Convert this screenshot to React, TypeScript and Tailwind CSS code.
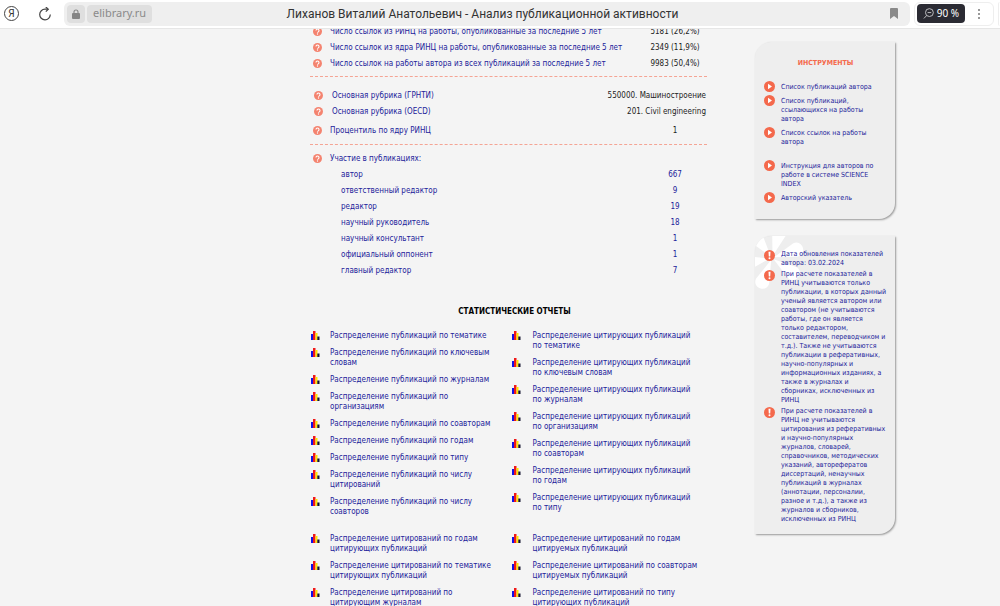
import clsx from 'clsx';

interface Row {
  label: string;
  value: string;
}

interface Tool {
  text: string;
  spaced?: boolean;
}

const citationRows: Row[] = [
  { label: 'Число ссылок из РИНЦ на работы, опубликованные за последние 5 лет', value: '5181 (26,2%)' },
  { label: 'Число ссылок из ядра РИНЦ на работы, опубликованные за последние 5 лет', value: '2349 (11,9%)' },
  { label: 'Число ссылок на работы автора из всех публикаций за последние 5 лет', value: '9983 (50,4%)' },
];

const rubricRows: Row[] = [
  { label: 'Основная рубрика (ГРНТИ)', value: '550000. Машиностроение' },
  { label: 'Основная рубрика (OECD)', value: '201. Civil engineering' },
];

const roleRows: Row[] = [
  { label: 'автор', value: '667' },
  { label: 'ответственный редактор', value: '9' },
  { label: 'редактор', value: '19' },
  { label: 'научный руководитель', value: '18' },
  { label: 'научный консультант', value: '1' },
  { label: 'официальный оппонент', value: '1' },
  { label: 'главный редактор', value: '7' },
];

const publicationReports = [
  'Распределение публикаций по тематике',
  'Распределение публикаций по ключевым словам',
  'Распределение публикаций по журналам',
  'Распределение публикаций по организациям',
  'Распределение публикаций по соавторам',
  'Распределение публикаций по годам',
  'Распределение публикаций по типу',
  'Распределение публикаций по числу цитирований',
  'Распределение публикаций по числу соавторов',
];

const citingReports = [
  'Распределение цитирующих публикаций по тематике',
  'Распределение цитирующих публикаций по ключевым словам',
  'Распределение цитирующих публикаций по журналам',
  'Распределение цитирующих публикаций по организациям',
  'Распределение цитирующих публикаций по соавторам',
  'Распределение цитирующих публикаций по годам',
  'Распределение цитирующих публикаций по типу',
];

const citationReportsLeft = [
  'Распределение цитирований по годам цитирующих публикаций',
  'Распределение цитирований по тематике цитирующих публикаций',
  'Распределение цитирований по цитирующим журналам',
];

const citationReportsRight = [
  'Распределение цитирований по годам цитируемых публикаций',
  'Распределение цитирований по соавторам цитируемых публикаций',
  'Распределение цитирований по типу цитирующих публикаций',
];

const tools: Tool[] = [
  { text: 'Список публикаций автора' },
  { text: 'Список публикаций,\nссылающихся на работы\nавтора' },
  { text: 'Список ссылок на работы\nавтора' },
  { text: 'Инструкция для авторов по\nработе в системе SCIENCE\nINDEX', spaced: true },
  { text: 'Авторский указатель' },
];

const notes = [
  `Дата обновления показателей
автора: 03.02.2024`,
  `При расчете показателей в
РИНЦ учитываются только
публикации, в которых данный
ученый является автором или
соавтором (не учитываются
работы, где он является
только редактором,
составителем, переводчиком и
т.д.). Также не учитываются
публикации в реферативных,
научно-популярных и
информационных изданиях, а
также в журналах и
сборниках, исключенных из
РИНЦ`,
  `При расчете показателей в
РИНЦ не учитываются
цитирования из реферативных
и научно-популярных
журналов, словарей,
справочников, методических
указаний, авторефератов
диссертаций, ненаучных
публикаций в журналах
(аннотации, персоналии,
разное и т.д.), а также из
журналов и сборников,
исключенных из РИНЦ`,
];

function HelpIcon() {
  return (
    <svg viewBox="0 0 18 18" className="block size-[9px]" aria-hidden="true">
      <circle cx="9" cy="9" r="9" fill="#f4836f" />
      <path d="M6 7.2a3 3 0 1 1 4.6 2.5C9.5 10.4 9 10.8 9 11.6" fill="none" stroke="#fff" strokeWidth="2.2" />
      <circle cx="9" cy="14" r="1.3" fill="#fff" />
    </svg>
  );
}

function ChartIcon() {
  return (
    <svg viewBox="0 0 9 9" className="block size-[9px] shrink-0" aria-hidden="true">
      <rect x="0" y="3" width="3" height="6" fill="#1212e8" />
      <rect x="2" y="0" width="2.5" height="9" fill="#f01818" />
      <rect x="4.5" y="2" width="2" height="7" fill="#ffe600" />
      <rect x="6.3" y="5.5" width="2.2" height="3.5" fill="#141430" />
    </svg>
  );
}

function PlayIcon() {
  return (
    <svg viewBox="0 0 22 22" className="block size-[11px] shrink-0" aria-hidden="true">
      <circle cx="11" cy="11" r="11" fill="#f4694c" />
      <path d="M8 5.5v11l8-5.5z" fill="#fff" />
    </svg>
  );
}

function AlertIcon() {
  return (
    <svg viewBox="0 0 22 22" className="block size-[11px] shrink-0" aria-hidden="true">
      <circle cx="11" cy="11" r="11" fill="#f4694c" />
      <path d="M9 3.5h4l-.6 9.500H9.600z" fill="#fff" />
      <circle cx="11" cy="16.5" r="2" fill="#fff" />
    </svg>
  );
}

function Flower() {
  const petal = 'M0-2L-7-25C-8-35 8-35 7-25z';
  return (
    <svg viewBox="0 0 56 60" className="absolute left-0 top-0 h-[60px] w-14" fill="#fff" aria-hidden="true">
      {[-38, 16, 71, 126, 202, 258].map((angle) => (
        <path key={angle} d={petal} transform={`translate(17 22) rotate(${angle})`} />
      ))}
    </svg>
  );
}

function BrowserBar() {
  return (
    <header className="flex h-[29px] shrink-0 items-center border-b border-[#e6e6e6] bg-white pb-px font-['Noto_Sans',sans-serif]">
      <button
        type="button"
        className="ml-1 flex size-[15px] items-center justify-center rounded-full border border-[#444] font-['Roboto',sans-serif] text-[10px] leading-none text-[#333]"
      >
        Я
      </button>
      <button type="button" aria-label="Обновить" className="ml-[19px] text-[#444]">
        <svg viewBox="0 0 14 14" className="size-[14px]" fill="none" stroke="currentColor" strokeWidth="1.2">
          <path d="M12.3 7.6A5.3 5.3 0 1 1 7 2.2h3" />
          <path d="M7.8 0 10.3 2.2 7.8 4.6" />
        </svg>
      </button>

      <div className="ml-3 grid h-6 flex-1 grid-cols-[1fr_auto_1fr] items-center rounded-md bg-[#efefef] pl-[3px] pr-3">
        <div className="flex items-center gap-[2px]">
          <span className="flex size-[18px] items-center justify-center rounded bg-[#dfdfdf]">
            <svg viewBox="0 0 8 10" className="h-[10px] w-2" aria-hidden="true">
              <path d="M2 5V3a2 2 0 0 1 4 0v2" fill="none" stroke="#858585" strokeWidth="1.1" />
              <rect y="4" width="8" height="6" rx="1" fill="#858585" />
            </svg>
          </span>
          <a href="#" className="flex h-[18px] items-center rounded bg-[#dfdfdf] px-[6px] text-[11px] text-[#8a8a8a]">
            elibrary.ru
          </a>
        </div>
        <h1 className="whitespace-nowrap font-['Roboto','Noto_Sans',sans-serif] text-[12px] text-[#333]">
          Лиханов Виталий Анатольевич - Анализ публикационной активности
        </h1>
        <button type="button" aria-label="Закладка" className="justify-self-end">
          <svg viewBox="0 0 8 11" className="h-[11px] w-2">
            <path d="M0 1a1 1 0 0 1 1-1h6a1 1 0 0 1 1 1v10L4 8 0 11z" fill="#8a8a8a" />
          </svg>
        </button>
      </div>

      <div className="ml-1 mr-1 flex h-6 items-center rounded-md border border-[#eee] pl-[2px]">
        <button
          type="button"
          className="flex h-[19px] w-12 items-center justify-center gap-[3px] rounded bg-[#2b2b33] text-[10px] text-white"
        >
          <svg viewBox="0 0 12 12" className="size-[11px]" fill="none" stroke="#c8c8cc" strokeWidth="1">
            <circle cx="7" cy="5" r="4.3" />
            <path d="M5 5h4M4 8.2 1 11.4" />
          </svg>
          <span className="whitespace-nowrap">90 %</span>
        </button>
        <button type="button" aria-label="Меню" className="flex w-7 justify-center">
          <svg viewBox="0 0 2 10" className="h-[10px] w-[2px]" fill="#777">
            <circle cx="1" cy="1" r="1" />
            <circle cx="1" cy="5" r="1" />
            <circle cx="1" cy="9" r="1" />
          </svg>
        </button>
      </div>
      <div className="h-6 w-[2px] rounded-l-md border-l border-[#eee]" />
    </header>
  );
}

function StatTable({ rows, link }: { rows: Row[]; link?: boolean }) {
  return (
    <table className="w-full table-fixed border-collapse">
      <tbody>
        {rows.map((row) => (
          <tr key={row.label} className="h-4">
            <td className={clsx('p-0', link ? 'w-[31px]' : 'w-5 pb-[2px] pl-[3px]')}>{!link && <HelpIcon />}</td>
            <td className="whitespace-nowrap p-0">
              <a href="#">{row.label}</a>
            </td>
            <td className={clsx('w-16 p-0 text-center', !link && 'text-[#222]')}>
              {link ? <a href="#">{row.value}</a> : row.value}
            </td>
          </tr>
        ))}
      </tbody>
    </table>
  );
}

function ReportList({ items, right }: { items: string[]; right?: boolean }) {
  return (
    <ul className={clsx('flex flex-col gap-[7px]', right ? 'pl-[3px]' : 'pl-px')}>
      {items.map((item) => (
        <li key={item} className={clsx('flex', right ? 'gap-3' : 'gap-[10px]')}>
          <ChartIcon />
          <a href="#" className="w-[168px] leading-[10px]">{item}</a>
        </li>
      ))}
    </ul>
  );
}

function Divider() {
  return <hr className="border-0 border-t border-dashed border-[#f4a494]" />;
}

function Statistics() {
  return (
    <main className="-mt-[5px] min-w-0 flex-1 text-[8px] leading-[10px]">
      <StatTable rows={citationRows} />
      <div className="pb-[11px] pt-1">
        <Divider />
      </div>

      <table className="w-full border-collapse">
        <tbody>
          {rubricRows.map((row) => (
            <tr key={row.label} className="h-4">
              <td className="w-[22px] p-0 pb-[2px] pl-1"><HelpIcon /></td>
              <td className="p-0"><a href="#">{row.label}</a></td>
              <td className="p-0 pr-px text-right text-[#222]">{row.value}</td>
            </tr>
          ))}
        </tbody>
      </table>
      <div className="pt-[3px]">
        <StatTable rows={[{ label: 'Процентиль по ядру РИНЦ', value: '1' }]} />
      </div>
      <div className="pb-[6px] pt-[5px]">
        <Divider />
      </div>

      <StatTable rows={[{ label: 'Участие в публикациях:', value: '' }]} />
      <StatTable rows={roleRows} link />

      <h2 className="mb-[14px] mt-[28px] pl-3 text-center font-bold text-black">СТАТИСТИЧЕСКИЕ ОТЧЕТЫ</h2>
      <div className="grid grid-cols-2">
        <ReportList items={publicationReports} />
        <ReportList items={citingReports} right />
      </div>
      <div className="mt-[17px] grid grid-cols-2">
        <ReportList items={citationReportsLeft} />
        <ReportList items={citationReportsRight} right />
      </div>
    </main>
  );
}

const cardClass =
  'relative overflow-hidden rounded-br-2xl rounded-tl-2xl bg-[#eee] pl-[9px] pr-1 shadow-[1px_1px_2px_#999]';

function Sidebar() {
  return (
    <aside className="mt-[13px] flex w-[140px] shrink-0 flex-col gap-[17px] text-[7px] leading-[9px]">
      <section className={clsx(cardClass, 'pb-4 pt-[17px]')}>
        <h2 className="mb-[15px] pr-1 text-center font-bold text-[#f4694c]">ИНСТРУМЕНТЫ</h2>
        <ul className="flex flex-col gap-[5px]">
          {tools.map((tool) => (
            <li key={tool.text} className={clsx('flex items-start gap-[6px]', tool.spaced && 'mt-[10px]')}>
              <span className="-mt-[2px] h-[9px]"><PlayIcon /></span>
              <a href="#" className="whitespace-pre-line">{tool.text}</a>
            </li>
          ))}
        </ul>
      </section>

      <section className={clsx(cardClass, 'pb-[10px] pt-[14px]')}>
        <Flower />
        <ul className="relative flex flex-col gap-[2px]">
          {notes.map((note) => (
            <li key={note} className="flex items-start gap-[6px]">
              <AlertIcon />
              <p className="whitespace-pre-line">{note}</p>
            </li>
          ))}
        </ul>
      </section>
    </aside>
  );
}

export default function App() {
  return (
    <div className="flex h-screen flex-col overflow-hidden bg-[#f4f4f4] font-['DejaVu_Sans_Condensed','Noto_Sans',sans-serif] text-[#22229a]">
      <BrowserBar />
      <div className="flex min-h-0 flex-1 items-start gap-12 overflow-hidden pl-[31%] pr-[10.5%]">
        <Statistics />
        <Sidebar />
      </div>
    </div>
  );
}
